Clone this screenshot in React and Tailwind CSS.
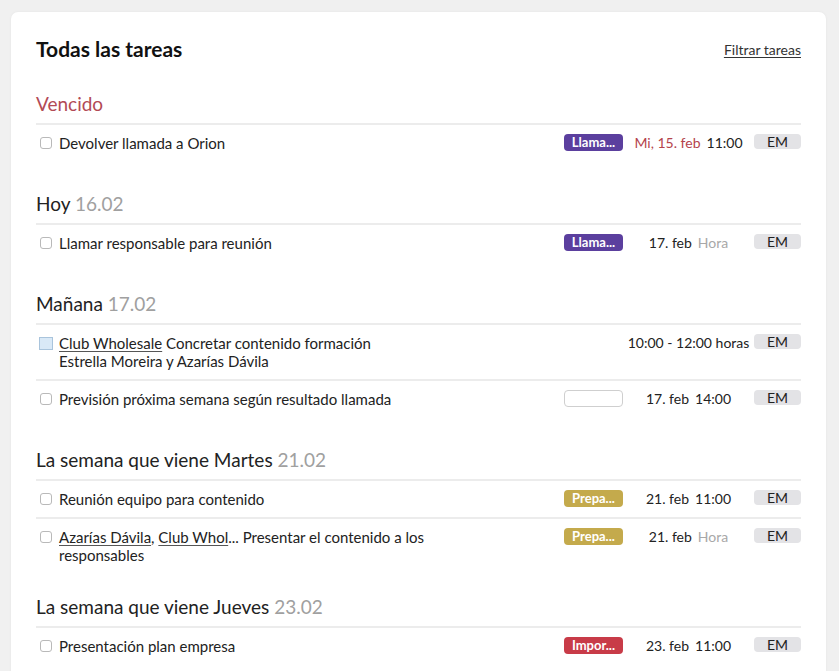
import { Fragment } from 'react';

const sections = [
  {
    title: 'Vencido',
    date: null,
    overdue: true,
    rows: [
      {
        text: 'Devolver llamada a Orion',
        tag: { label: 'Llama...', cls: 'bg-[#5b3f9e]' },
        date: 'Mi, 15. feb',
        dateRed: true,
        time: '11:00',
      },
    ],
  },
  {
    title: 'Hoy',
    date: '16.02',
    rows: [
      {
        text: 'Llamar responsable para reunión',
        tag: { label: 'Llama...', cls: 'bg-[#5b3f9e]' },
        date: '17. feb',
        time: 'Hora',
        timeMuted: true,
      },
    ],
  },
  {
    title: 'Mañana',
    date: '17.02',
    rows: [
      {
        links: ['Club Wholesale'],
        text: 'Concretar contenido formación',
        sub: 'Estrella Moreira y Azarías Dávila',
        highlight: true,
        range: '10:00 - 12:00 horas',
      },
      {
        text: 'Previsión próxima semana según resultado llamada',
        emptyTag: true,
        date: '17. feb',
        time: '14:00',
      },
    ],
  },
  {
    title: 'La semana que viene Martes',
    date: '21.02',
    rows: [
      {
        text: 'Reunión equipo para contenido',
        tag: { label: 'Prepa...', cls: 'bg-[#c4aa4c]' },
        date: '21. feb',
        time: '11:00',
      },
      {
        links: ['Azarías Dávila', 'Club Whol'],
        text: 'Presentar el contenido a los responsables',
        tag: { label: 'Prepa...', cls: 'bg-[#c4aa4c]' },
        date: '21. feb',
        time: 'Hora',
        timeMuted: true,
      },
    ],
  },
  {
    title: 'La semana que viene Jueves',
    date: '23.02',
    tight: true,
    rows: [
      {
        text: 'Presentación plan empresa',
        tag: { label: 'Impor...', cls: 'bg-[#c83b48]' },
        date: '23. feb',
        time: '11:00',
      },
    ],
  },
];

const TaskRow = ({ row, last }) => (
  <div className={`flex items-start py-[9px] ${last ? '' : 'border-b-2 border-[#ececec]'}`}>
    {row.highlight ? (
      <span className="mt-[3px] ml-[3px] w-[14px] h-[13px] shrink-0 border border-[#a9c4dc] bg-[#d9e9f7]" />
    ) : (
      <span className="mt-[3px] ml-1 w-3 h-3 shrink-0 rounded-[3px] border border-[#b9b9b9] bg-white" />
    )}
    <div className={`flex-1 ${row.highlight ? 'ml-[6px]' : 'ml-[7px]'} pr-[70px] text-[15px] leading-[18px] text-[#222]`}>
      {row.links &&
        row.links.map((l, i) => (
          <Fragment key={l}>
            <a className="underline underline-offset-2 decoration-[#555]">{l}</a>
            {i < row.links.length - 1 ? ', ' : row.links.length > 1 ? '... ' : ' '}
          </Fragment>
        ))}
      {row.text}
      {row.sub && <div>{row.sub}</div>}
    </div>
    <div className="w-[59px] shrink-0">
      {row.tag && (
        <div className={`h-[17px] rounded-[4px] text-white text-[13px] font-bold leading-[17px] text-center ${row.tag.cls}`}>
          {row.tag.label}
        </div>
      )}
      {row.emptyTag && <div className="h-[17px] rounded-[4px] border border-[#cfcfcf] bg-white" />}
    </div>
    <div className="w-[131px] shrink-0 flex justify-center gap-[6px] text-[14px] leading-[18px] text-[#222]">
      {row.range ? (
        <span>{row.range}</span>
      ) : (
        <>
          <span className={row.dateRed ? 'text-[#b4434c]' : ''}>{row.date}</span>
          <span className={row.timeMuted ? 'text-[#a8a8a8]' : ''}>{row.time}</span>
        </>
      )}
    </div>
    <div className="w-[47px] shrink-0 h-[15px] rounded-[4px] bg-[#e3e3e6] text-[14px] leading-[15px] text-center text-[#222]">
      EM
    </div>
  </div>
);

export default function App() {
  return (
    <div className="min-h-screen bg-[#f0f0f0] pt-3 pl-[11px] font-['Lato',sans-serif] overflow-hidden h-[671px]">
      <div className="w-[815px] bg-white rounded-[7px] shadow-[0_0_3px_rgba(0,0,0,0.05)] px-[25px] pt-[25px] pb-12">
        <div className="flex items-center justify-between">
          <h1 className="text-[21px] leading-[24px] font-bold text-[#111]">Todas las tareas</h1>
          <a className="text-[14px] text-[#333] underline underline-offset-2 cursor-pointer">Filtrar tareas</a>
        </div>

        {sections.map((s) => (
          <section key={s.title} className={s.tight ? 'mt-[22px]' : 'mt-[31px]'}>
            <h2
              className={`text-[19px] leading-[24px] pb-[7px] border-b-2 border-[#ececec] ${
                s.overdue ? 'text-[#b24a55]' : 'text-[#222]'
              }`}
            >
              {s.title}
              {s.date && <span className="text-[#a0a0a0]"> {s.date}</span>}
            </h2>
            {s.rows.map((r, i) => (
              <TaskRow key={i} row={r} last={i === s.rows.length - 1} />
            ))}
          </section>
        ))}
      </div>
    </div>
  );
}
